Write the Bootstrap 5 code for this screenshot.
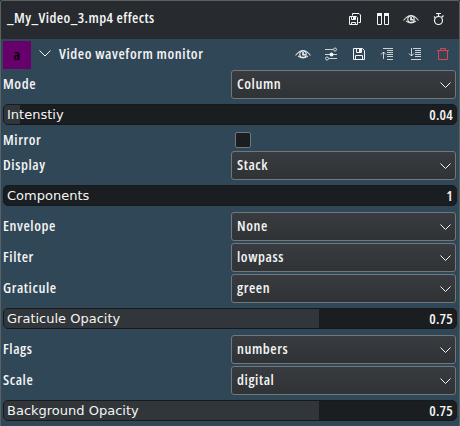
<!DOCTYPE html>
<html lang="en"><head><meta charset="utf-8"><title>Effects</title>
<link href="https://cdn.jsdelivr.net/npm/bootstrap@5.3.0/dist/css/bootstrap.min.css" rel="stylesheet">
<style>
html,body{height:100%;overflow:hidden}
body{background:#272a2e;color:#f4f4f4;font:600 14.5px/20px "Open Sans","Noto Sans",sans-serif;font-stretch:75%;letter-spacing:.58px}
.panel{height:426px;background:#304757;border:1px solid #5c6062;border-bottom:0;border-radius:3px 3px 0 0;overflow:hidden}
.head{height:38px;background:#272a2e;padding:0 12px 3px 6px;letter-spacing:.42px}
.head>span{padding-bottom:1px}
.effect{height:31px;padding:0 8px 2px 2px}
.swatch{width:28px;height:28px;background:#66006a;color:#000;font-size:15px;margin-top:3px;padding-bottom:2px}
.tools{gap:12px}
svg{display:block;fill:none;stroke:#f4f4f4;flex:none}
.params{padding:0 3px 0 2px}
.prow{height:29px}
.prow+.prow{margin-top:2px}
.prow.check{height:26px}
.prow.check+.prow{margin-top:0}
.caption{width:228px;padding-bottom:2px}
.check .caption{padding:3px 0 0}
.combo{width:225px;height:29px;border:1px solid #72777a;border-radius:3px;background:linear-gradient(#383c40,#2f3336);padding:0 4px 0 5px}
.combo span{padding-bottom:2px}
.slide{height:21px;margin:5px -1px 6px 0;border:1px solid #17191b;border-radius:5px;background:#1b1e20;padding:0 3px 0 3px;letter-spacing:.2px}
.slide+.check{margin-top:-6px}
.fill{background:#31363a;top:0;bottom:0;left:0;border-radius:4px 0 0 4px}
.pname{font:400 13px/19px "DejaVu Sans",sans-serif;letter-spacing:0}
.tick{width:16px;height:16px;border:1px solid #72777a;border-radius:2px;background:#1b1e20;margin:3px 0 0 4px}
</style></head><body>
<svg width="0" height="0" class="position-absolute"><defs>
<g id="eye"><path d="M.5 9.5Q8-.5 15.5 9.5M3 10Q8 14 13 10" stroke-width="1.1" opacity=".85"/><circle cx="8" cy="8.2" r="3.2" stroke-width="1.1"/><path d="M8 6v2.800h2.500" stroke-width="1.600"/></g>
<path id="chev" d="M.5.5 6 6 11.500.5"/>
<path id="chevs" d="M.5.5 5.500 5.500 10.500.5"/>
</defs></svg>
<div class="panel">
<header class="head d-flex align-items-center justify-content-between"><span>_My_Video_3.mp4 effects</span>
<div class="tools d-flex">
<svg width="16" height="16"><path d="M5.500 4.500V2.500H12l1.500 1.500V11.500H11.500M2.500 5.500V13.500H10.500V6.500L9.500 5.500zM4.500 5.500V8.500H8.500V5.500M4.500 13.500V11.500H8.500V13.500"/><path d="M7 6v2" stroke-width="2"/></svg>
<svg width="16" height="16"><path d="M2.500 2.500H6.500V13.500H2.500zM9.500 2.500H13.500V13.500H9.500z"/><path d="M2 3.500H7M9 3.500H14" stroke-width="3"/></svg>
<svg width="16" height="16"><use href="#eye"/></svg>
<svg width="16" height="16"><circle cx="7.500" cy="9.500" r="4" stroke-width="1.200"/><path d="M5 2.500H10M7.500 2V6M10.500 6.500 12.500 4.500M3 5.500l1 1" stroke-width="1.200"/></svg>
</div></header>
<section class="effect d-flex align-items-center">
<div class="swatch d-flex align-items-center justify-content-center">a</div>
<svg width="12" height="7" class="ms-2"><use href="#chev"/></svg>
<span class="ms-2 flex-grow-1">Video waveform monitor</span>
<div class="tools d-flex">
<svg width="16" height="16"><use href="#eye"/></svg>
<svg width="16" height="16"><path d="M2 3.500H10M2 8.500H14M6 12.500H14" opacity=".8"/><circle cx="12" cy="3.500" r="1.500" opacity=".8"/><circle cx="4" cy="12.500" r="1.500" opacity=".8"/><circle cx="8.500" cy="8.500" r="1.500" fill="#fff" stroke="#fff"/></svg>
<svg width="16" height="16"><path d="M2.500 2.500H11.500L13.500 4.500V13.500H2.500zM5.500 2.500V6.500H10.500V2.500M4.500 13.500V9.500H11.500V13.500"/><path d="M9 3v3" stroke-width="2"/></svg>
<svg width="16" height="16"><path d="M4 2.500H14M8 4.500H14M8 6.500H14M8 8.500H14M8 10.500H14M8 13.500H14M4.500 13V6M2 8.500 4.500 6 7 8.500" opacity=".8"/></svg>
<svg width="16" height="16"><path d="M6 2.500H14M8 4.500H14M8 6.500H14M8 8.500H14M8 10.500H14M4 13.500H14M4.500 2V10M2 7.500 4.500 10 7 7.500" opacity=".8"/></svg>
<svg width="16" height="16"><path d="M2 4.500H14M5.500 4V2.500H10.500V4M3.500 5V13.500H12.500V5" stroke="#da4453"/></svg>
</div></section>
<main class="params">
<div class="prow d-flex align-items-center"><span class="caption">Mode</span><div class="combo d-flex align-items-center justify-content-between"><span>Column</span><svg width="11" height="6"><use href="#chevs"/></svg></div></div>
<div class="slide position-relative d-flex align-items-center justify-content-between"><div class="fill position-absolute" style="width:3.5%"></div><span class="pname position-relative">Intenstiy</span><span class="position-relative">0.04</span></div>
<div class="prow check d-flex align-items-center"><span class="caption">Mirror</span><div class="tick"></div></div>
<div class="prow d-flex align-items-center"><span class="caption">Display</span><div class="combo d-flex align-items-center justify-content-between"><span>Stack</span><svg width="11" height="6"><use href="#chevs"/></svg></div></div>
<div class="slide position-relative d-flex align-items-center justify-content-between"><span class="pname">Components</span><span>1</span></div>
<div class="prow d-flex align-items-center"><span class="caption">Envelope</span><div class="combo d-flex align-items-center justify-content-between"><span>None</span><svg width="11" height="6"><use href="#chevs"/></svg></div></div>
<div class="prow d-flex align-items-center"><span class="caption">Filter</span><div class="combo d-flex align-items-center justify-content-between"><span>lowpass</span><svg width="11" height="6"><use href="#chevs"/></svg></div></div>
<div class="prow d-flex align-items-center"><span class="caption">Graticule</span><div class="combo d-flex align-items-center justify-content-between"><span>green</span><svg width="11" height="6"><use href="#chevs"/></svg></div></div>
<div class="slide position-relative d-flex align-items-center justify-content-between"><div class="fill position-absolute" style="width:69.7%"></div><span class="pname position-relative">Graticule Opacity</span><span class="position-relative">0.75</span></div>
<div class="prow d-flex align-items-center"><span class="caption">Flags</span><div class="combo d-flex align-items-center justify-content-between"><span>numbers</span><svg width="11" height="6"><use href="#chevs"/></svg></div></div>
<div class="prow d-flex align-items-center"><span class="caption">Scale</span><div class="combo d-flex align-items-center justify-content-between"><span>digital</span><svg width="11" height="6"><use href="#chevs"/></svg></div></div>
<div class="slide position-relative d-flex align-items-center justify-content-between"><div class="fill position-absolute" style="width:69.7%"></div><span class="pname position-relative">Background Opacity</span><span class="position-relative">0.75</span></div>
</main>
</div></body></html>
